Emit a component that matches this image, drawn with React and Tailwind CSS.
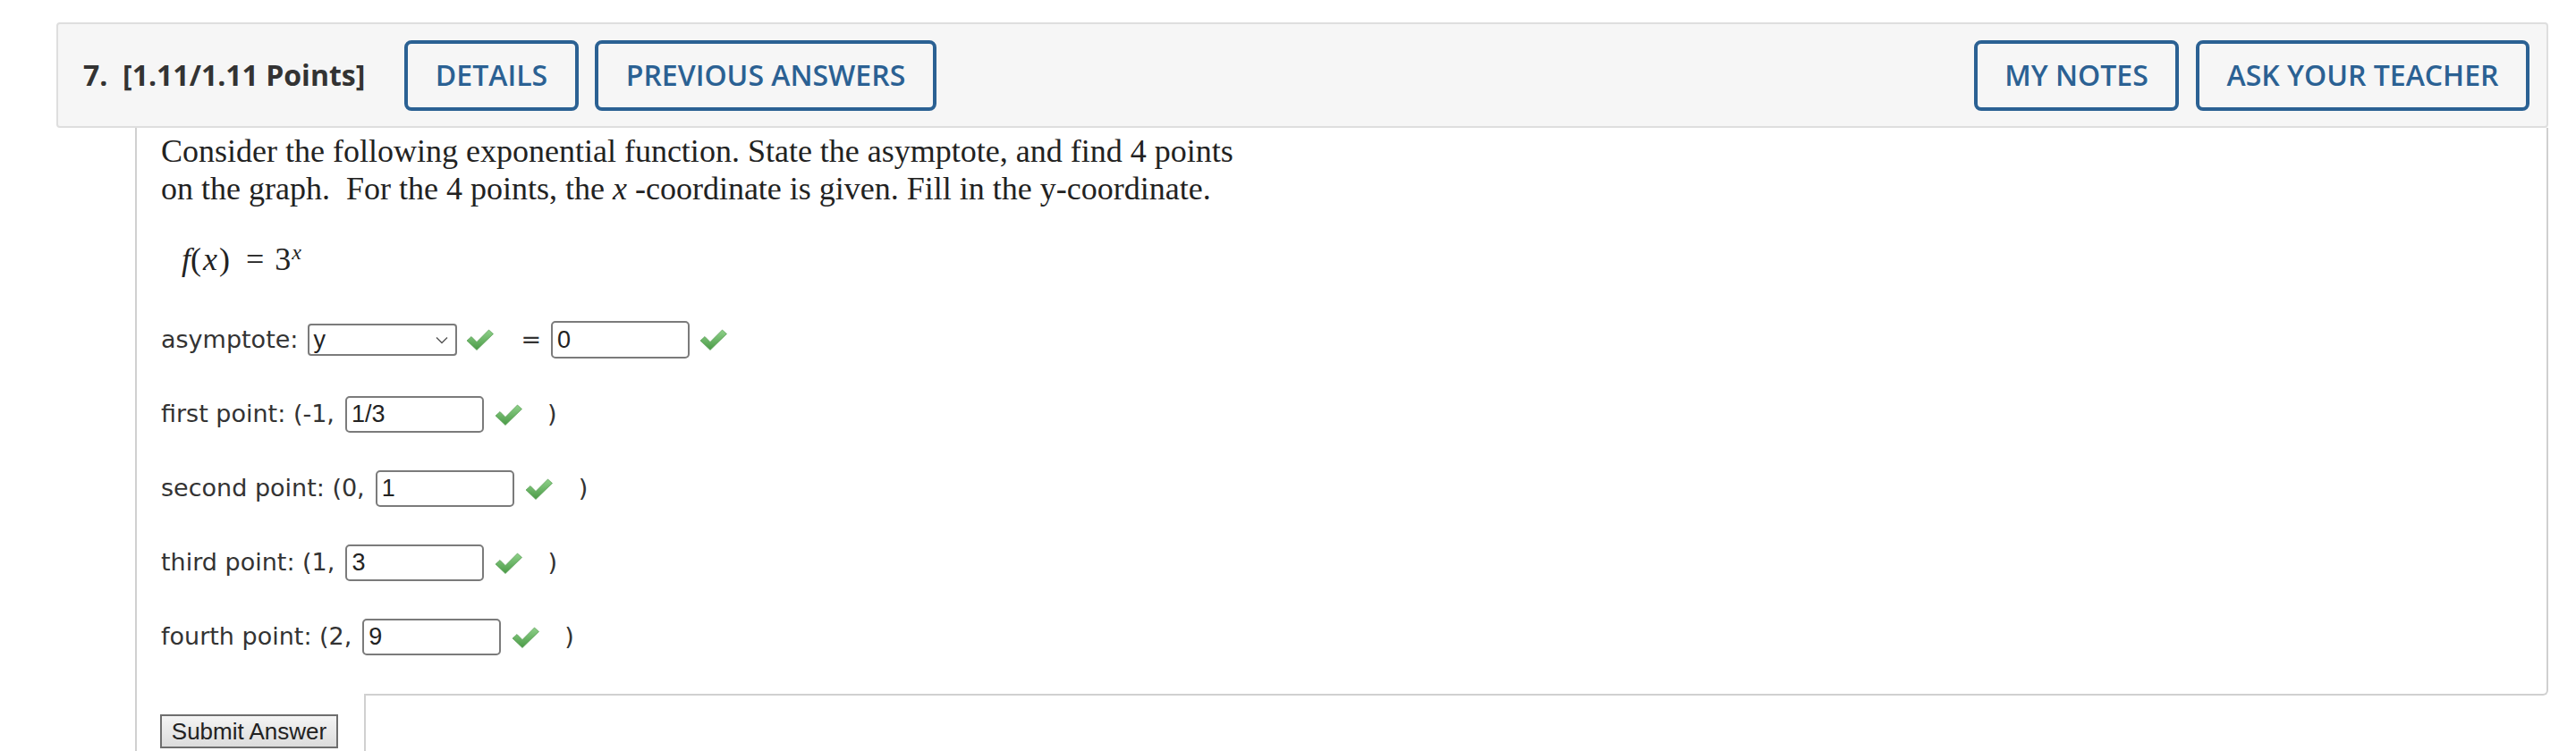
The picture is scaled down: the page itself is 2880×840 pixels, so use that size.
import React from 'react';

const Check = () => (
  <svg width="31" height="24" viewBox="0 0 31 24" className="shrink-0">
    <defs>
      <linearGradient id="chk" x1="0" y1="0" x2="0" y2="1">
        <stop offset="0" stopColor="#8fd18a" />
        <stop offset="1" stopColor="#4a9a46" />
      </linearGradient>
    </defs>
    <path d="M1 13 L6 8.5 L12 14.5 L25.5 1 L30.5 5.5 L12 23.5 Z" fill="url(#chk)" stroke="#589c53" strokeWidth="0.7" strokeLinejoin="round" />
  </svg>
);

const AnswerBox = ({ value }) => (
  <div className="w-[155px] h-[41px] border-2 border-[#7b7b7b] rounded-[5px] bg-white flex items-center pl-[5px] text-[27px] text-[#222] font-['Liberation_Sans',sans-serif]">
    {value}
  </div>
);

const PointRow = ({ label, value, closeGap }) => (
  <div className="flex items-center h-[41px]">
    <span>{label}</span>
    <div className="ml-[12px]">
      <AnswerBox value={value} />
    </div>
    <div className="ml-[12px]">
      <Check />
    </div>
    <span className={closeGap}>)</span>
  </div>
);

const HeaderButton = ({ width, children }) => (
  <div className={`${width} h-[79px] flex items-center justify-center border-4 border-[#2b6193] rounded-[8px] text-[#2b6193] font-semibold text-[32px] leading-none`}>
    {children}
  </div>
);

export default function App() {
  return (
    <div className="min-h-[840px] w-[2880px] bg-white pt-[25px] pl-[63px] pr-[31px] overflow-hidden">
      {/* Header */}
      <div className="h-[118px] border-2 border-[#dedede] bg-[#f6f6f6] rounded-[4px] flex items-center pl-[28px] pr-[19px] font-['Open_Sans',sans-serif]">
        <div className="w-[318px] text-[32px] font-bold text-[#333] whitespace-pre">7.  [1.11/1.11 Points]</div>
        <div className="ml-[41px] flex gap-[18px]">
          <HeaderButton width="w-[195px]">DETAILS</HeaderButton>
          <HeaderButton width="w-[382px]">PREVIOUS ANSWERS</HeaderButton>
        </div>
        <div className="ml-auto flex gap-[19px]">
          <HeaderButton width="w-[229px]">MY NOTES</HeaderButton>
          <HeaderButton width="w-[373px]">ASK YOUR TEACHER</HeaderButton>
        </div>
      </div>

      {/* Question body */}
      <div className="ml-[88px] border-l-2 border-[#d0d0d0]">
        <div className="border-r-2 border-b-2 border-[#d0d0d0] rounded-br-[6px] pl-[27px] pt-[5px] pb-[43px]">
          <p className="font-['Liberation_Serif',serif] text-[36px] leading-[42px] text-[#222]">
            Consider the following exponential function. State the asymptote, and find 4 points
            <br />
            on the graph.&nbsp; For the 4 points, the <i>x</i> -coordinate is given. Fill in the y-coordinate.
          </p>
          <p className="mt-[37px] ml-[23px] flex items-baseline font-['Liberation_Serif',serif] text-[36px] leading-[42px] text-[#222]">
            <span>
              <i>f</i>(<i className="mx-[2px]">x</i>)
            </span>
            <span className="ml-[18px]">=</span>
            <span className="ml-[12px]">3</span>
            <sup className="ml-[1px] text-[24px] italic">x</sup>
          </p>

          <div className="mt-[48px] flex flex-col gap-[42px] font-['DejaVu_Sans',sans-serif] text-[27px] text-[#333]">
            <div className="flex items-center h-[42px]">
              <span>asymptote:</span>
              <div className="ml-[11px] w-[167px] h-[36px] border-2 border-[#7b7b7b] rounded-[4px] bg-white flex items-center pl-[4px] pr-[8px] font-['Liberation_Sans',sans-serif] text-[27px] text-[#222]">
                <span>y</span>
                <svg width="14" height="9" viewBox="0 0 14 9" className="ml-auto">
                  <path d="M1 1.5 L7 7.5 L13 1.5" fill="none" stroke="#555" strokeWidth="1.4" />
                </svg>
              </div>
              <div className="ml-[10px]">
                <Check />
              </div>
              <span className="ml-[30px]">=</span>
              <div className="ml-[11px] h-[42px]">
                <div className="w-[155px] h-[42px] border-2 border-[#7b7b7b] rounded-[5px] bg-white flex items-center pl-[5px] text-[27px] text-[#222] font-['Liberation_Sans',sans-serif]">
                  0
                </div>
              </div>
              <div className="ml-[11px]">
                <Check />
              </div>
            </div>
            <PointRow label="first point: (-1," value="1/3" closeGap="ml-[28px]" />
            <PointRow label="second point: (0," value="1" closeGap="ml-[29px]" />
            <PointRow label="third point: (1," value="3" closeGap="ml-[28px]" />
            <PointRow label="fourth point: (2," value="9" closeGap="ml-[28px]" />
          </div>
        </div>

        <div className="flex">
          <div className="w-[254px] -mt-[2px] bg-white pt-[23px] pl-[26px]">
            <button className="w-[199px] h-[38px] border-2 border-[#6e6e6e] bg-gradient-to-b from-[#f4f4f4] to-[#dcdcdc] font-['Liberation_Sans',sans-serif] text-[26px] text-[#222] leading-none">
              Submit Answer
            </button>
          </div>
          <div className="flex-1 h-[80px] border-l-2 border-[#d0d0d0]" />
        </div>
      </div>
    </div>
  );
}
